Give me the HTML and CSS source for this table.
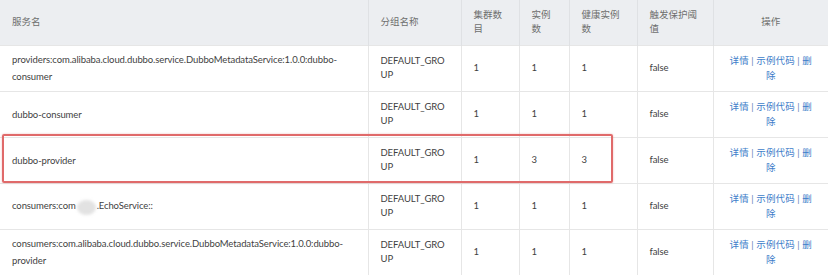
FILE: index.html
```html
<!DOCTYPE html>
<html lang="zh-CN">
<head>
<meta charset="utf-8">
<link rel="stylesheet" href="styles.css">
</head>
<body>
<div class="wrap">
  <table class="svc">
    <colgroup>
      <col class="c-name"><col class="c-group"><col class="c-cluster"><col class="c-inst"><col class="c-healthy"><col class="c-thresh"><col class="c-ops">
    </colgroup>
    <thead>
      <tr>
        <th>服务名</th>
        <th>分组名称</th>
        <th>集群数目</th>
        <th>实例数</th>
        <th>健康实例数</th>
        <th>触发保护阈值</th>
        <th class="ops">操作</th>
      </tr>
    </thead>
    <tbody>
      <tr>
        <td class="name">providers:com.alibaba.cloud.dubbo.service.DubboMetadataService:1.0.0:dubbo-consumer</td>
        <td class="grp">DEFAULT_GROUP</td>
        <td>1</td><td>1</td><td>1</td><td>false</td>
        <td class="ops"><a>详情</a> | <a>示例代码</a> | <a>删除</a></td>
      </tr>
      <tr>
        <td class="name">dubbo-consumer</td>
        <td class="grp">DEFAULT_GROUP</td>
        <td>1</td><td>1</td><td>1</td><td>false</td>
        <td class="ops"><a>详情</a> | <a>示例代码</a> | <a>删除</a></td>
      </tr>
      <tr>
        <td class="name">dubbo-provider</td>
        <td class="grp">DEFAULT_GROUP</td>
        <td>1</td><td>3</td><td>3</td><td>false</td>
        <td class="ops"><a>详情</a> | <a>示例代码</a> | <a>删除</a></td>
      </tr>
      <tr>
        <td class="name">consumers:com<span class="smudge"></span>.EchoService::</td>
        <td class="grp">DEFAULT_GROUP</td>
        <td>1</td><td>1</td><td>1</td><td>false</td>
        <td class="ops"><a>详情</a> | <a>示例代码</a> | <a>删除</a></td>
      </tr>
      <tr>
        <td class="name">consumers:com.alibaba.cloud.dubbo.service.DubboMetadataService:1.0.0:dubbo-provider</td>
        <td class="grp">DEFAULT_GROUP</td>
        <td>1</td><td>1</td><td>1</td><td>false</td>
        <td class="ops"><a>详情</a> | <a>示例代码</a> | <a>删除</a></td>
      </tr>
    </tbody>
  </table>
  <div class="highlight"></div>
</div>
</body>
</html>
```
FILE: styles.css
```css
html, body {
  margin: 0;
  padding: 0;
  background: #fff;
}
.wrap {
  position: relative;
  width: 828px;
}
.svc {
  width: 828px;
  table-layout: fixed;
  border-collapse: collapse;
  font-family: "Lato", "Noto Sans CJK SC", sans-serif;
  font-size: 9.5px;
  color: #3f3f3f;
}
.c-name { width: 368px; }
.c-group { width: 93px; }
.c-cluster { width: 58px; }
.c-inst { width: 50px; }
.c-healthy { width: 68px; }
.c-thresh { width: 76px; }
.c-ops { width: 115px; }

.svc th {
  height: 45px;
  background: #eceef1;
  color: #6e6e6e;
  font-weight: normal;
  text-align: left;
  padding: 0 12px;
  line-height: 14px;
  border-left: 1px solid #dfe1e4;
  box-sizing: border-box;
}
.svc th:first-child { border-left: none; }
.svc td {
  height: 46px;
  padding: 0 12px;
  line-height: 14px;
  letter-spacing: -0.1px;
  border-top: 1px solid #e6e6e6;
  border-left: 1px solid #e6e6e6;
  vertical-align: middle;
  box-sizing: border-box;
  word-break: break-all;
}
.svc td:first-child { border-left: none; }
.svc tbody tr:last-child td { border-bottom: 1px solid #e6e6e6; }
.svc td.name {
  word-break: normal;
  line-height: 17px;
}
.svc .ops {
  text-align: center;
  padding: 0 13px;
}
.svc td.ops {
  color: #5f86b8;
  letter-spacing: 0.1px;
  line-height: 15px;
}
.svc td.ops a { color: #3d7cc9; }
.smudge {
  display: inline-block;
  width: 19px;
  height: 15px;
  margin: 0 1px;
  vertical-align: middle;
  border-radius: 50%;
  background: #e2e2e2;
  filter: blur(1.5px);
}
.highlight {
  position: absolute;
  left: 2px;
  top: 134px;
  width: 611px;
  height: 49px;
  box-sizing: border-box;
  border: 2px solid #e06a6a;
  border-radius: 2px;
  box-shadow: 0 0 2px rgba(224, 106, 106, 0.5);
  pointer-events: none;
}
```
